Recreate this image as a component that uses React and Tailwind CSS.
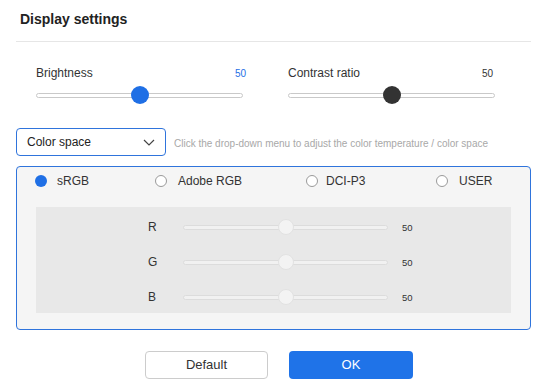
import React from 'react';

const font = "font-['Liberation_Sans',Arial,sans-serif]";

function Track({ pos, thumb, track = 'bg-white border-[#c9c9c9]', size = 18, w }) {
	return (
		<div className="relative flex items-center h-[18px]" style={{ width: w }}>
			<div className={`w-full h-[5px] rounded-full border ${track}`} />
			<div
				className={`absolute top-1/2 -translate-y-1/2 -translate-x-1/2 rounded-full ${thumb}`}
				style={{ left: pos, width: size, height: size }}
			/>
		</div>
	);
}

function Radio({ label, checked, width, gap = 10 }) {
	return (
		<div className="flex items-center" style={{ width, gap }}>
			{checked ? (
				<span className="w-[12px] h-[12px] rounded-full bg-[#1f6fe5]" />
			) : (
				<span className="w-[12px] h-[12px] rounded-full border border-[#9a9a9a] bg-white" />
			)}
			<span className="text-[12px] text-[#333]">{label}</span>
		</div>
	);
}

function ChannelRow({ name }) {
	return (
		<div className="flex items-center h-[20px] pl-[112px]">
			<span className="w-[35px] text-[12px] text-[#333]">{name}</span>
			<Track
				w={205}
				pos={103}
				size={16}
				track="bg-[#f1f1f1] border-[#dcdcdc]"
				thumb="bg-[#f3f3f3] border border-[#e2e2e2]"
			/>
			<span className="ml-[14px] text-[9.5px] text-[#333] mt-[3px]">50</span>
		</div>
	);
}

export default function App() {
	return (
		<div className={`w-[547px] h-[389px] bg-white ${font} text-[#333] overflow-hidden`}>
			<div className="px-4">
				<div className="h-[42px] pt-[11px] pl-1 border-b border-[#e6e6e6] text-[14px] leading-[16px] font-bold text-[#222]">
					Display settings
				</div>

				{/* sliders */}
				<div className="flex pl-5 gap-[42px] mt-[23px]">
					<div className="w-[210px]">
						<div className="flex justify-between items-center h-[16px]">
							<span className="text-[12px]">Brightness</span>
							<span className="text-[10px] text-[#1f6fe5]">50</span>
						</div>
						<div className="mt-[5px]">
							<Track w={207} pos={104} thumb="bg-[#1f6fe5]" />
						</div>
					</div>
					<div className="w-[207px]">
						<div className="flex justify-between items-center h-[16px] pr-[2px]">
							<span className="text-[12px]">Contrast ratio</span>
							<span className="text-[10px]">50</span>
						</div>
						<div className="mt-[5px]">
							<Track w={207} pos={104} thumb="bg-[#333333]" />
						</div>
					</div>
				</div>

				{/* color space select */}
				<div className="flex items-center mt-[24px]">
					<div className="w-[150px] h-[28px] flex items-center justify-between pl-[10px] pr-[10px] border border-[#2f74dc] rounded-[4px]">
						<span className="text-[12px] text-[#222]">Color space</span>
						<svg width="12" height="7" viewBox="0 0 12 7" fill="none" stroke="#444" strokeWidth="1.2">
							<path d="M1 1l5 5 5-5" />
						</svg>
					</div>
					<span className="ml-[8px] mt-[3px] text-[10px] text-[#a8a8a8]">
						Click the drop-down menu to adjust the color temperature / color space
					</span>
				</div>

				{/* panel */}
				<div className="mt-[10px] h-[164px] border border-[#2f74dc] rounded-[4px] bg-[#f5f5f5] px-[19px]">
					<div className="flex items-center h-[28px] -ml-[1px]">
						<Radio label="sRGB" checked width={120} />
						<Radio label="Adobe RGB" width={151} gap={11} />
						<Radio label="DCI-P3" width={130} gap={8} />
						<Radio label="USER" gap={11} />
					</div>
					<div className="mt-[12px] h-[106px] bg-[#e8e8e8] pt-[10px] flex flex-col gap-[15px]">
						<ChannelRow name="R" />
						<ChannelRow name="G" />
						<ChannelRow name="B" />
					</div>
				</div>

				{/* buttons */}
				<div className="flex gap-[21px] mt-[21px] pl-[129px]">
					<button className="w-[123px] h-[28px] border border-[#cccccc] rounded-[4px] bg-white text-[13px] text-[#333]">
						Default
					</button>
					<button className="w-[124px] h-[28px] rounded-[4px] bg-[#1f73e8] text-[13px] text-white">
						OK
					</button>
				</div>
			</div>
		</div>
	);
}
